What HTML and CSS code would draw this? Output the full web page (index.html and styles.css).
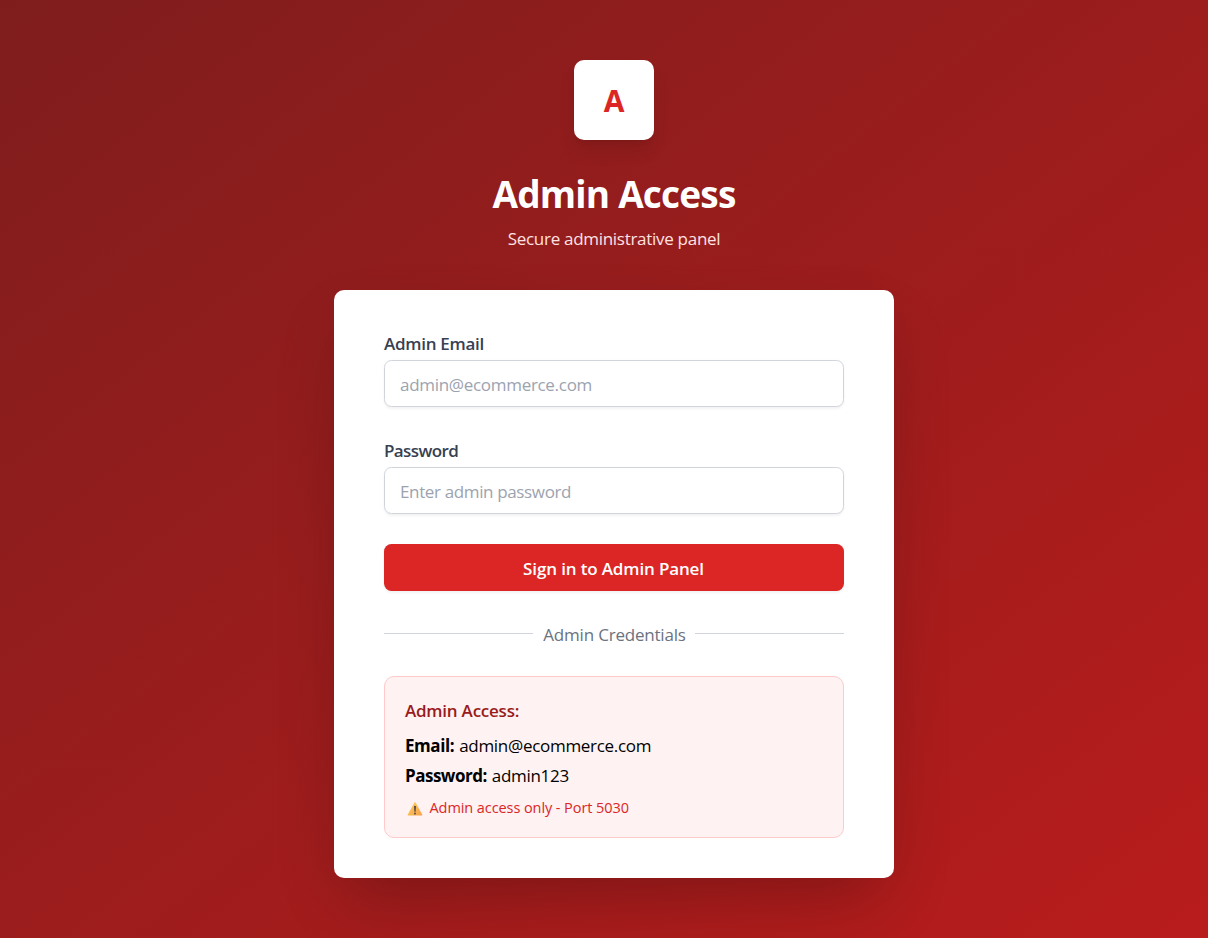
FILE: index.html
```html
<!DOCTYPE html>
<html lang="en">
<head>
<meta charset="utf-8">
<title>Admin Access</title>
<link rel="stylesheet" href="styles.css">
</head>
<body>
<main class="page">
  <header class="intro">
    <div class="logo"><span class="logo-letter">A</span></div>
    <h1 class="title">Admin Access</h1>
    <p class="subtitle">Secure administrative panel</p>
  </header>
  <section class="card">
    <form class="form">
      <div class="field">
        <label class="label" for="email">Admin Email</label>
        <input class="input" id="email" type="email" placeholder="admin@ecommerce.com">
      </div>
      <div class="field">
        <label class="label label-password" for="password">Password</label>
        <input class="input input-password" id="password" type="password" placeholder="Enter admin password">
      </div>
      <button class="submit" type="button">Sign in to Admin Panel</button>
    </form>
    <div class="divider"><span class="divider-text">Admin Credentials</span></div>
    <div class="notice">
      <h2 class="notice-title">Admin Access:</h2>
      <p class="row"><strong class="key">Email:</strong><span class="value">admin@ecommerce.com</span></p>
      <p class="row"><strong class="key key-password">Password:</strong><span class="value">admin123</span></p>
      <p class="warning">
        <svg class="warning-icon" viewBox="0 0 16 14" aria-hidden="true">
          <defs><linearGradient id="amber" x1="0" y1="0" x2="1" y2="1"><stop offset="0" stop-color="#ffd05a"/><stop offset="1" stop-color="#f5a04c"/></linearGradient></defs>
          <path d="M7.3 .8Q8 -.2 8.7 .8L15.3 12.7Q15.6 13.5 14.8 13.5H1.2Q.4 13.5 .7 12.7Z" fill="url(#amber)"/>
          <path d="M7.1 4H8.9L8.6 9.8H7.4Z" fill="#494047"/>
          <circle cx="8" cy="11.5" r=".9" fill="#494047"/>
        </svg>
        <span class="warning-text">Admin access only - Port 5030</span>
      </p>
    </div>
  </section>
</main>
</body>
</html>
```
FILE: styles.css
```css
* { box-sizing: border-box; margin: 0; }
body {
  font-family: "Open Sans", "Noto Sans", sans-serif;
  font-size: 17px;
  line-height: 25px;
  overflow: hidden;
  background: #991b1b;
}
.page {
  height: 938px;
  padding: 60px 0 60px 20px;
  display: flex;
  flex-direction: column;
  align-items: center;
  background: linear-gradient(to bottom right, #7f1d1d, #b91c1c);
}
.intro { display: flex; flex-direction: column; align-items: center; height: 230px; flex: none; white-space: nowrap; }
.logo {
  width: 80px; height: 80px;
  display: flex; align-items: center; justify-content: center;
  border-radius: 10px;
  background: #fff;
  color: #dc2626;
  font-size: 30px; font-weight: 700;
  box-shadow: 0 12.5px 18.75px -3.75px rgba(0,0,0,.1), 0 5px 7.5px -5px rgba(0,0,0,.1);
}
.title { margin-top: 29px; line-height: 50px; font-size: 37px; font-weight: 700; letter-spacing: -.8px; color: #fff; }
.subtitle { margin-top: 7px; letter-spacing: -.29px; color: #fee2e2; }
.card {
  width: 560px; height: 588px; flex: none;
  padding: 40px 50px;
  border-radius: 10px;
  background: #fff;
  box-shadow: 0 31.25px 62.5px -15px rgba(0,0,0,.25);
}
.form { display: flex; flex-direction: column; gap: 30px; }
.label { display: block; height: 30px; line-height: 27px; font-weight: 600; letter-spacing: -.28px; color: #374151; }
.label-password { letter-spacing: -.6px; }
.input {
  display: block; width: 100%; height: 47px;
  padding: 1px 15px 0;
  border: 1px solid #d1d5db; border-radius: 7.5px;
  background: #fff;
  font: inherit;
  letter-spacing: -.3px;
  box-shadow: 0 1.25px 2.5px rgba(0,0,0,.05);
}
.input-password { letter-spacing: -.36px; }
.input::placeholder { color: #9ca3af; opacity: 1; }
.submit {
  height: 47px; padding: 1px 1px 0 0;
  border: 0; border-radius: 7.5px;
  background: #dc2626; color: #fff;
  font: inherit; font-weight: 600; letter-spacing: -.14px;
  box-shadow: 0 1.25px 2.5px rgba(0,0,0,.05);
}
.divider { margin-top: 30px; height: 25px; display: flex; align-items: center; gap: 10px; letter-spacing: -.2px; color: #6b7280; }
.divider::before, .divider::after { content: ""; flex: 1; height: 1px; background: #d1d5db; }
.divider::after { margin-left: -1px; }
.divider-text { padding-top: 2px; }
.notice {
  margin-top: 30px; height: 162px; padding: 20px;
  border: 1px solid #fecaca; border-radius: 10px;
  background: #fef2f2;
}
.notice-title { font-size: 17px; font-weight: 600; line-height: 27px; letter-spacing: -.23px; color: #991b1b; margin-bottom: 9px; }
.row { display: flex; gap: 5px; color: #000; margin-bottom: 5px; }
.key { font-weight: 700; letter-spacing: -.42px; }
.key-password { letter-spacing: -.5px; }
.value { letter-spacing: -.3px; }
.warning { display: flex; align-items: center; gap: 7px; padding-left: 1.5px; font-size: 14.5px; line-height: 20px; letter-spacing: -.08px; color: #dc2626; margin-top: 10px; }
.warning-icon { width: 16px; height: 14px; margin-top: 1px; }
```
